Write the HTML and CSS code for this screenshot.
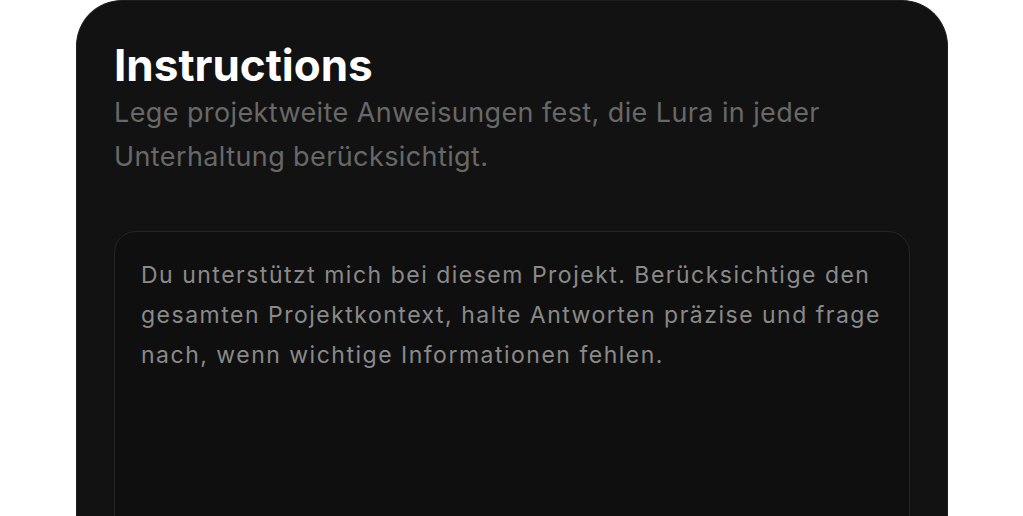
FILE: index.html
```html
<!DOCTYPE html>
<html lang="de">
<head>
<meta charset="utf-8">
<link rel="stylesheet" href="styles.css">
</head>
<body>
<div class="page">
  <section class="card">
    <h1 class="title">Instructions</h1>
    <p class="subtitle">Lege projektweite Anweisungen fest, die Lura in jeder Unterhaltung berücksichtigt.</p>
    <div class="editor">
      <p class="editor-text">Du unterstützt mich bei diesem Projekt. Berücksichtige den gesamten Projektkontext, halte Antworten präzise und frage nach, wenn wichtige Informationen fehlen.</p>
    </div>
  </section>
</div>
</body>
</html>
```
FILE: styles.css
```css
html, body {
  margin: 0;
  padding: 0;
  background: #ffffff;
  font-family: Inter, "Noto Sans", sans-serif;
}
.page {
  width: 1023px;
  height: 516px;
  overflow: hidden;
  padding: 0 75px 0 76px;
  box-sizing: border-box;
}
.card {
  background: #121212;
  border: 1px solid #1e1e1e;
  border-bottom: none;
  border-radius: 46px 46px 0 0;
  padding: 38px 37px 0 37px;
  height: 600px;
  box-sizing: border-box;
}
.title {
  margin: 0;
  color: #ffffff;
  font-size: 44px;
  font-weight: 700;
  line-height: 52px;
}
.subtitle {
  margin: 0;
  color: #686868;
  font-size: 27px;
  line-height: 44px;
  letter-spacing: 0.4px;
  width: 760px;
}
.editor {
  margin-top: 52px;
  background: #0f0f0f;
  border: 1px solid #252525;
  border-radius: 22px;
  height: 400px;
  padding: 23px 14px 23px 26px;
}
.editor-text {
  margin: 0;
  color: #8a8a8a;
  font-size: 23px;
  line-height: 40px;
  letter-spacing: 1.5px;
}
```
